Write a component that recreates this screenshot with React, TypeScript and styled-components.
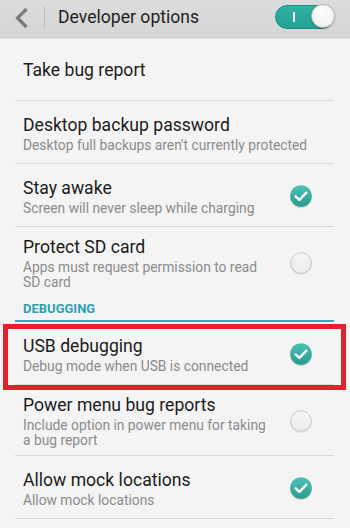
import React from 'react';
import styled, { createGlobalStyle } from 'styled-components';

interface OptionProps {
  title: string;
  summary?: string;
  state?: 'on' | 'off';
  last?: boolean;
  marked?: boolean;
}

const GlobalStyle = createGlobalStyle`
  html, body {
    margin: 0;
    padding: 0;
    background: #f4f4f4;
  }
  body {
    font-family: Roboto, "Noto Sans", "Liberation Sans", sans-serif;
    -webkit-font-smoothing: antialiased;
  }
`;

function CheckMark({ state }: { state: 'on' | 'off' }) {
  if (state === 'on') {
    return (
      <svg width="24" height="26" viewBox="0 0 24 26">
        <defs>
          <linearGradient id="tealFill" x1="0" y1="0" x2="0" y2="1">
            <stop offset="0" stopColor="#4cc2b5" />
            <stop offset="1" stopColor="#2a9b8f" />
          </linearGradient>
        </defs>
        <circle cx="12" cy="13.4" r="10.8" fill="rgba(0,0,0,0.12)" />
        <circle cx="12" cy="12" r="10.8" fill="url(#tealFill)" />
        <path
          d="M6.6 12.4 L10.4 15.9 L17.4 8.6"
          fill="none"
          stroke="#fff"
          strokeWidth="2.3"
          strokeLinecap="round"
          strokeLinejoin="round"
        />
      </svg>
    );
  }
  return (
    <svg width="24" height="26" viewBox="0 0 24 26">
      <defs>
        <linearGradient id="greyFill" x1="0" y1="0" x2="0" y2="1">
          <stop offset="0" stopColor="#f6f6f6" />
          <stop offset="1" stopColor="#ebebeb" />
        </linearGradient>
      </defs>
      <circle cx="12" cy="13.2" r="10.8" fill="rgba(0,0,0,0.08)" />
      <circle cx="12" cy="12" r="10.3" fill="url(#greyFill)" stroke="#c9c9c9" strokeWidth="1" />
    </svg>
  );
}

function Option({ title, summary, state, last, marked }: OptionProps) {
  return (
    <Row $last={last} $marked={marked}>
      <Texts>
        <Title>{title}</Title>
        {summary && <Summary>{summary}</Summary>}
      </Texts>
      {state && (
        <Mark>
          <CheckMark state={state} />
        </Mark>
      )}
    </Row>
  );
}

export default function App() {
  return (
    <>
      <GlobalStyle />
      <Screen>
        <Header>
          <Back>
            <svg width="14" height="22" viewBox="0 0 14 22">
              <polyline
                points="11.5,2 2.5,11 11.5,20"
                fill="none"
                stroke="#7a7a7a"
                strokeWidth="3.2"
                strokeLinejoin="miter"
              />
            </svg>
          </Back>
          <Separator />
          <HeaderTitle>Developer options</HeaderTitle>
          <Toggle>
            <ToggleBar />
            <Knob />
          </Toggle>
        </Header>
        <List>
          <Option title="Take bug report" />
          <Option
            title="Desktop backup password"
            summary="Desktop full backups aren't currently protected"
          />
          <Option
            title="Stay awake"
            summary="Screen will never sleep while charging"
            state="on"
          />
          <Option
            title="Protect SD card"
            summary="Apps must request permission to read SD card"
            state="off"
            last
          />
          <Section>DEBUGGING</Section>
          <Option
            title="USB debugging"
            summary="Debug mode when USB is connected"
            state="on"
            marked
          />
          <Option
            title="Power menu bug reports"
            summary="Include option in power menu for taking a bug report"
            state="off"
          />
          <Option title="Allow mock locations" summary="Allow mock locations" state="on" />
        </List>
      </Screen>
    </>
  );
}

const Screen = styled.div`
  width: 350px;
  height: 528px;
  overflow: hidden;
  background: #f4f4f4;
`;

const Header = styled.div`
  height: 38px;
  box-sizing: border-box;
  display: flex;
  align-items: center;
  background: linear-gradient(#dcdcdc, #d6d6d6);
  border-bottom: 1px solid #cfcfcf;
  box-shadow: 0 1px 1px rgba(0, 0, 0, 0.06);
  padding: 0 16px 0 15px;
`;

const Back = styled.div`
  width: 16px;
  height: 22px;
  display: flex;
  align-items: center;
  margin-right: 13px;
  margin-top: -2px;
`;

const Separator = styled.div`
  width: 1px;
  height: 22px;
  margin-top: -4px;
  background: #bdbdbd;
`;

const HeaderTitle = styled.div`
  flex: 1;
  margin-left: 13px;
  margin-top: -3px;
  font-size: 17.6px;
  color: #1e1e1e;
`;

const Toggle = styled.div`
  position: relative;
  width: 59px;
  height: 24px;
  margin-top: -4px;
`;

const ToggleBar = styled.div`
  width: 100%;
  height: 100%;
  box-sizing: border-box;
  border-radius: 12px;
  background: linear-gradient(#30b1a3, #25a092);
  border: 1px solid #1f8c80;
  &::before {
    content: '';
    position: absolute;
    left: 18px;
    top: 7px;
    width: 2px;
    height: 10px;
    background: #e8f7f4;
  }
`;

const Knob = styled.div`
  position: absolute;
  right: -1px;
  top: -0.5px;
  width: 24px;
  height: 24px;
  box-sizing: border-box;
  border-radius: 50%;
  background: radial-gradient(circle at 45% 35%, #ffffff, #ececec);
  border: 1px solid #b9b9b9;
  box-shadow: 0 1px 2px rgba(0, 0, 0, 0.25);
`;

const List = styled.div`
  display: flex;
  flex-direction: column;
`;

const Row = styled.div<{ $last?: boolean; $marked?: boolean }>`
  position: relative;
  margin: 0 16px 0 15px;
  min-height: 63px;
  box-sizing: border-box;
  padding: 9px 23px 7px 8px;
  display: flex;
  align-items: center;
  gap: 16px;
  border-bottom: ${(p) => (p.$last ? 'none' : '1px solid #d9d9d9')};

  ${(p) =>
    p.$marked &&
    `
    &::after {
      content: '';
      position: absolute;
      left: -12px;
      right: -12px;
      top: 2px;
      bottom: -6px;
      border: 5px solid #e3202b;
      pointer-events: none;
    }
  `}
`;

const Texts = styled.div`
  flex: 1;
  display: flex;
  flex-direction: column;
`;

const Title = styled.div`
  font-size: 17.6px;
  line-height: 22px;
  color: #1b1b1b;
`;

const Summary = styled.div`
  margin-top: 2px;
  font-size: 13.8px;
  line-height: 15px;
  color: #8b8b8b;
  white-space: normal;
`;

const Mark = styled.div`
  width: 24px;
  height: 26px;
  flex-shrink: 0;
  margin-top: 2px;
  margin-right: -2px;
`;

const Section = styled.div`
  margin: 0 16px 0 15px;
  padding: 4px 8px 4px;
  font-size: 13px;
  line-height: 15px;
  font-weight: 700;
  color: #2d9fb4;
  border-bottom: 2px solid #3aa5b8;
`;
